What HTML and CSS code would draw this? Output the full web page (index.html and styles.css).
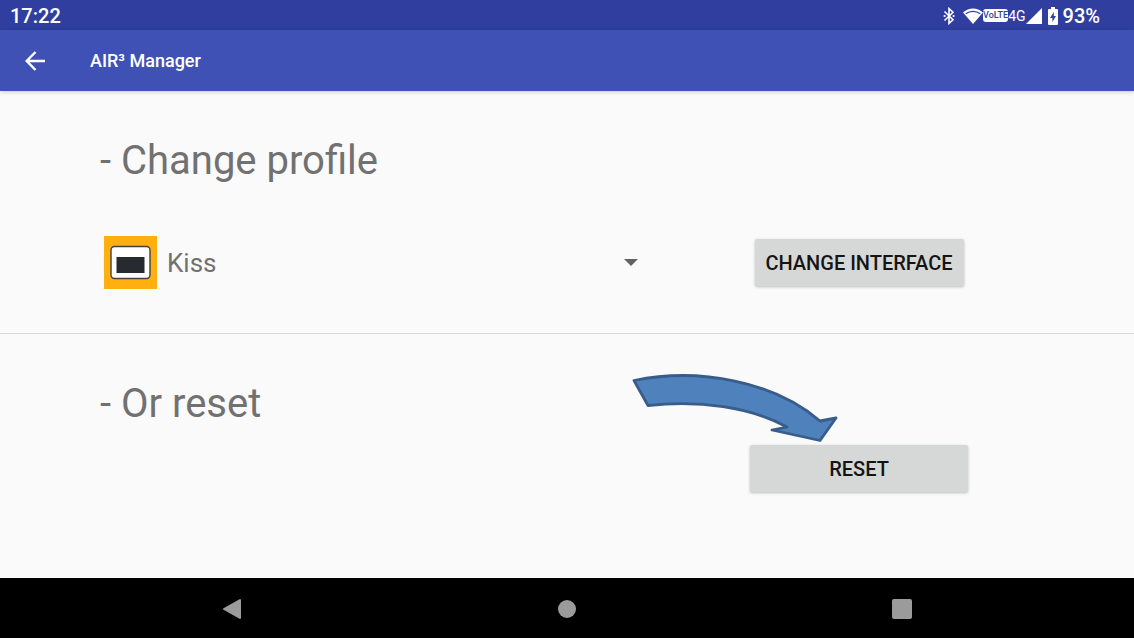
FILE: index.html
```html
<!DOCTYPE html>
<html lang="en">
<head>
  <meta charset="UTF-8">
  <meta name="viewport" content="width=device-width, initial-scale=1.0">
  <title>AIR³ Manager</title>
  <link rel="stylesheet" href="styles.css">
</head>
<body>
  <!-- Status bar -->
  <div class="status-bar">
    <span>17:22</span>
    <div class="status-icons">
      <svg class="bluetooth" width="12" height="18" viewBox="0 0 12 18" fill="none" stroke="#fff">
        <path d="M1.5 4.5 L10 12.8 L6 16.4 V1.6 L10 5.2 L1.5 13.5" stroke-width="1.6"/>
        <circle cx="1.6" cy="9" r="1.1" fill="#fff" stroke="none"/>
        <circle cx="10.6" cy="9" r="1.1" fill="#fff" stroke="none"/>
      </svg>
      <svg width="20" height="16" viewBox="0 0 20 16">
        <path d="M0 4.5 C6 -1 14 -1 20 4.5 L10 16 Z" fill="#fff"/>
        <path d="M2.8 5.8 C7 2.6 13 2.6 17.2 5.8" fill="none" stroke="#303f9f" stroke-width="1.2"/>
      </svg>
      <span class="volte">VoLTE</span>
      <span class="network">4G</span>
      <svg class="signal" width="16" height="16" viewBox="0 0 16 16">
        <path d="M16 0 V16 H0 Z" fill="#fff"/>
      </svg>
      <svg class="battery" width="10" height="18" viewBox="0 0 10 18">
        <path d="M3 0 H7 V2 H9 Q10 2 10 3 V17 Q10 18 9 18 H1 Q0 18 0 17 V3 Q0 2 1 2 H3 Z" fill="#fff"/>
        <path d="M5.8 5 L2 11 H4.4 V15 L8 9 H5.8 Z" fill="#303f9f"/>
      </svg>
      <span>93%</span>
    </div>
  </div>

  <!-- App bar -->
  <header class="app-bar">
    <button class="back" aria-label="Back">
      <svg width="20" height="20" viewBox="0 0 20 20" fill="none" stroke="#fff" stroke-width="2.4">
        <path d="M20 10 H2 M10.5 1 L1.7 10 L10.5 19"/>
      </svg>
    </button>
    <h1>AIR³ Manager</h1>
  </header>

  <main>
    <section class="profile">
      <h2><label for="profile">- Change profile</label></h2>
      <div class="row">
        <div class="picker">
          <svg width="53" height="53" viewBox="0 0 53 53">
            <rect width="53" height="53" fill="#ffb010"/>
            <rect x="7" y="10.5" width="39" height="32" rx="3.5" fill="#fff" stroke="#45413a" stroke-width="1.4"/>
            <rect x="12.5" y="21" width="28" height="16" fill="#272b30"/>
          </svg>
          <select id="profile">
            <option>Kiss</option>
          </select>
          <svg class="caret" width="14" height="7" viewBox="0 0 14 7">
            <path d="M0 0 H14 L7 7 Z" fill="#626262"/>
          </svg>
        </div>
        <div class="action">
          <button class="raised">CHANGE INTERFACE</button>
        </div>
      </div>
    </section>

    <section class="reset">
      <h2>- Or reset</h2>
      <div class="row">
        <div class="action">
          <button class="raised wide">RESET</button>
          <!-- Arrow pointing at the reset button -->
          <svg class="pointer" width="210" height="72" viewBox="630 372 210 72">
            <path d="M634 380.5 C700 367 775 382 820 421 L836 418 L820 440.5 L772 430 L787 427 C750 407 700 400 648 405.5 Z" fill="#4f81bd" stroke="#385d8a" stroke-width="2.8" stroke-linejoin="round"/>
          </svg>
        </div>
      </div>
    </section>
  </main>

  <!-- System navigation -->
  <nav class="nav-bar">
    <button aria-label="Back">
      <svg width="20" height="22" viewBox="0 0 20 22">
        <path d="M18 2 V20 L2 11 Z" fill="#9b9b9b" stroke="#9b9b9b" stroke-width="2" stroke-linejoin="round"/>
      </svg>
    </button>
    <button aria-label="Home">
      <svg width="18" height="18" viewBox="0 0 18 18"><circle cx="9" cy="9" r="9" fill="#9b9b9b"/></svg>
    </button>
    <button aria-label="Overview">
      <svg width="20" height="20" viewBox="0 0 20 20"><rect width="20" height="20" rx="2" fill="#9b9b9b"/></svg>
    </button>
  </nav>
</body>
</html>
```
FILE: styles.css
```css
:root {
  --primary: #3f51b5;
  --primary-dark: #303f9f;
  --text-secondary: #717171;
}

* {
  box-sizing: border-box;
}

body {
  margin: 0;
  min-height: 100vh;
  display: flex;
  flex-direction: column;
  font-family: Roboto, sans-serif;
  background-color: #fafafa;
  color: var(--text-secondary);
}

button {
  padding: 0;
  border: none;
  background: none;
  font-family: inherit;
  cursor: pointer;
}

svg {
  display: block;
}

/* Status bar */
.status-bar {
  display: flex;
  justify-content: space-between;
  align-items: center;
  height: 30px;
  padding: 1px 34px 0 10px;
  background-color: var(--primary-dark);
  color: #fff;
  font-size: 20px;
  font-weight: 500;
}

.status-icons {
  display: flex;
  align-items: center;
}

.bluetooth {
  margin-right: 8px;
}

.volte {
  border-radius: 3px;
  background-color: #fff;
  color: var(--primary-dark);
  font-size: 9px;
  line-height: 13px;
}

.network {
  font-size: 14px;
  font-weight: 400;
}

.battery {
  margin: 0 5px 0 6px;
}

/* App bar */
.app-bar {
  display: flex;
  align-items: center;
  gap: 45px;
  height: 61px;
  padding-left: 25px;
  background-color: var(--primary);
  box-shadow: 0 1px 4px rgba(0, 0, 0, 0.2);
}

.app-bar h1 {
  margin: 0;
  color: #fff;
  font-size: 18px;
  font-weight: 500;
}

/* Content */
main {
  flex: 1;
}

section {
  padding: 46px 66px 44px 100px;
}

.profile {
  border-bottom: 1px solid #d8d8d8;
}

h2 {
  margin: 0;
  font-size: 40px;
  font-weight: 400;
  line-height: 48px;
}

.row {
  display: grid;
  grid-template-columns: 25fr 19fr;
  align-items: center;
}

.profile .row {
  margin-top: 51px;
}

.reset {
  padding-bottom: 0;
}

.reset .row {
  margin-top: 17px;
}

.picker {
  position: relative;
  display: flex;
  align-items: center;
  padding-left: 4px;
}

.picker select {
  flex: 1;
  appearance: none;
  padding: 1px 10px 0;
  border: none;
  background: none;
  color: inherit;
  font-family: inherit;
  font-size: 26px;
}

.caret {
  position: absolute;
  right: 12px;
  pointer-events: none;
}

.action {
  position: relative;
  grid-column: 2;
  display: flex;
  justify-content: center;
}

.raised {
  width: 50%;
  height: 47px;
  padding-top: 1px;
  border-radius: 2px;
  background-color: #d6d8d7;
  color: #141414;
  font-size: 20px;
  font-weight: 500;
  white-space: nowrap;
  box-shadow: 0 1px 3px rgba(0, 0, 0, 0.25);
}

.raised.wide {
  width: 52%;
}

.pointer {
  position: absolute;
  right: 228px;
  bottom: 48px;
  pointer-events: none;
}

/* System navigation */
.nav-bar {
  display: grid;
  grid-template-columns: repeat(3, 1fr);
  height: 60px;
  padding: 2px 64px 0;
  background-color: #000;
}

.nav-bar button {
  display: flex;
  justify-content: center;
  align-items: center;
}
```
